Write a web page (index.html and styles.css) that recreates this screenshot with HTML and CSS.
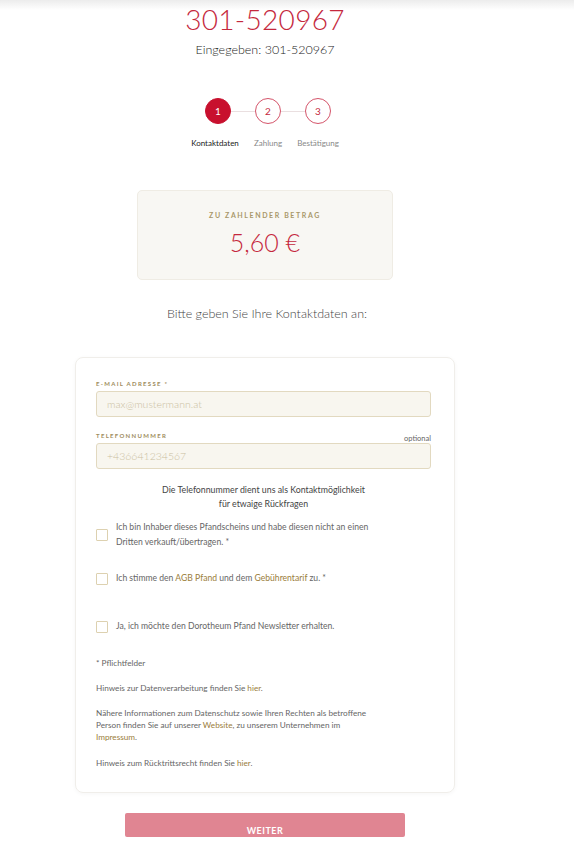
FILE: index.html
```html
<!DOCTYPE html>
<html lang="de">
<head>
<meta charset="utf-8">
<title>Kontaktdaten</title>
<link rel="stylesheet" href="styles.css">
</head>
<body>
<div class="topshade"></div>
<main class="page">
  <h1 class="ticket">301-520967</h1>
  <p class="entered">Eingegeben: 301-520967</p>

  <div class="steps">
    <div class="step active"><span class="circle">1</span><span class="step-label">Kontaktdaten</span></div>
    <div class="line"></div>
    <div class="step"><span class="circle">2</span><span class="step-label">Zahlung</span></div>
    <div class="line"></div>
    <div class="step"><span class="circle">3</span><span class="step-label">Bestätigung</span></div>
  </div>

  <div class="amount">
    <div class="amount-label">ZU ZAHLENDER BETRAG</div>
    <div class="amount-value">5,60 €</div>
  </div>

  <p class="intro">Bitte geben Sie Ihre Kontaktdaten an:</p>

  <form class="card">
    <div class="field">
      <div class="label-row"><label class="flabel">E-MAIL ADRESSE *</label></div>
      <input class="input" type="text" placeholder="max@mustermann.at">
    </div>
    <div class="field">
      <div class="label-row"><label class="flabel">TELEFONNUMMER</label><span class="optional">optional</span></div>
      <input class="input" type="text" placeholder="+436641234567">
    </div>
    <p class="help">Die Telefonnummer dient uns als Kontaktmöglichkeit<br>für etwaige Rückfragen</p>

    <div class="check check-1"><span class="box"></span><span class="ctext">Ich bin Inhaber dieses Pfandscheins und habe diesen nicht an einen Dritten verkauft/übertragen. *</span></div>
    <div class="check check-2"><span class="box"></span><span class="ctext">Ich stimme den <a class="link">AGB Pfand</a> und dem <a class="link">Gebührentarif</a> zu. *</span></div>
    <div class="check check-3"><span class="box"></span><span class="ctext">Ja, ich möchte den Dorotheum Pfand Newsletter erhalten.</span></div>

    <p class="note first">* Pflichtfelder</p>
    <p class="note">Hinweis zur Datenverarbeitung finden Sie <a class="link">hier</a>.</p>
    <p class="note">Nähere Informationen zum Datenschutz sowie Ihren Rechten als betroffene Person finden Sie auf unserer <a class="link">Website</a>, zu unserem Unternehmen im <a class="link">Impressum</a>.</p>
    <p class="note last">Hinweis zum Rücktrittsrecht finden Sie <a class="link">hier</a>.</p>
  </form>

  <div class="btn-wrap"><button class="btn" type="button">WEITER</button></div>
</main>
</body>
</html>
```

FILE: styles.css
```css
* { box-sizing: border-box; }
html, body { margin: 0; padding: 0; background: #fff; }
body {
  font-family: "Lato", "Open Sans", "Liberation Sans", sans-serif;
  color: #333;
  width: 574px;
  height: 849px;
  overflow: hidden;
  position: relative;
}
.topshade {
  position: absolute;
  left: 0; right: 0; top: 0;
  height: 10px;
  background: linear-gradient(#ececec, rgba(255,255,255,0));
}
.page {
  width: 530px;
  display: flex;
  flex-direction: column;
  align-items: center;
  padding-top: 3px;
}
.ticket {
  margin: 0;
  font-weight: 300;
  font-size: 28px;
  line-height: 32px;
  color: #c5283d;
  letter-spacing: 0.3px;
}
.entered {
  margin: 7px 0 0;
  font-size: 12.5px;
  line-height: 16px;
  color: #222;
  font-weight: 300;
}
.steps {
  margin-top: 40px;
  display: flex;
  align-items: flex-start;
  margin-left: 6px;
}
.step {
  width: 26px;
  display: flex;
  flex-direction: column;
  align-items: center;
}
.circle {
  width: 26px;
  height: 26px;
  border-radius: 50%;
  border: 1.5px solid #d4546a;
  color: #c5283d;
  font-size: 10px;
  display: flex;
  align-items: center;
  justify-content: center;
  background: #fff;
}
.step.active .circle {
  background: #c8102e;
  border-color: #c8102e;
  color: #fff;
}
.step-label {
  margin-top: 14px;
  font-size: 8px;
  line-height: 10px;
  white-space: nowrap;
  color: #888;
}
.step.active .step-label { color: #222; margin-right: 6px; }
.line {
  width: 24px;
  height: 1px;
  background: #eadfe0;
  margin-top: 13px;
}
.amount {
  margin-top: 42px;
  width: 256px;
  height: 90px;
  background: #f8f7f3;
  border: 1px solid #efece4;
  border-radius: 5px;
  display: flex;
  flex-direction: column;
  align-items: center;
  padding-top: 20px;
}
.amount-label {
  font-size: 7px;
  font-weight: 700;
  letter-spacing: 1.6px;
  color: #a8976a;
  line-height: 9px;
}
.amount-value {
  margin-top: 7px;
  font-size: 25px;
  font-weight: 300;
  color: #c5283d;
  line-height: 30px;
}
.intro {
  margin: 26px 0 0 4px;
  font-size: 12.5px;
  line-height: 16px;
  color: #444;
  font-weight: 300;
}
.card {
  margin-top: 35px;
  width: 380px;
  border: 1px solid #f0eeea;
  border-radius: 8px;
  box-shadow: 0 1px 4px rgba(0,0,0,0.04);
  padding: 18px 23px 23px 20px;
  display: flex;
  flex-direction: column;
}
.field { display: flex; flex-direction: column; }
.field + .field { margin-top: 11px; }
.label-row {
  display: flex;
  justify-content: space-between;
  align-items: flex-end;
  height: 12px;
}
.flabel {
  font-size: 6px;
  font-weight: 700;
  letter-spacing: 1.3px;
  color: #9e8c60;
  line-height: 8px;
}
.optional {
  font-size: 7.5px;
  color: #666;
  line-height: 9px;
  margin-bottom: -3px;
}
.input {
  margin-top: 3px;
  height: 26px;
  width: 100%;
  background: #f8f6ef;
  border: 1px solid #e2d9c0;
  border-radius: 3px;
  padding: 0 10px;
  font-family: inherit;
  font-size: 10.5px;
  color: #333;
  outline: none;
}
.input::placeholder { color: #cbbf9f; font-weight: 300; }
.help {
  margin: 14px 0 0;
  text-align: center;
  font-size: 8.8px;
  line-height: 14px;
  color: #444;
}
.check {
  display: flex;
  align-items: center;
  gap: 8px;
  font-size: 8.6px;
  line-height: 15px;
  color: #666;
}
.check-1 { margin-top: 9px; }
.check-2 { margin-top: 21px; }
.check-3 { margin-top: 33px; }
.box {
  flex: none;
  width: 12px;
  height: 12px;
  border: 1.2px solid #ddd1b0;
  border-radius: 1px;
  background: #fff;
}
.ctext { max-width: 275px; }
.link { color: #9a7d3a; text-decoration: none; }
.note {
  margin: 13px 0 0;
  font-size: 8.2px;
  line-height: 12px;
  color: #666;
  max-width: 285px;
}
.note.first { margin-top: 23px; }
.note.last { margin-top: 14px; }
.btn-wrap {
  width: 100%;
  display: flex;
  justify-content: center;
  margin-top: 20px;
}
.btn {
  width: 280px;
  height: 24px;
  background: #e08592;
  border: none;
  border-radius: 2px;
  color: #fff;
  font-family: inherit;
  font-weight: 700;
  font-size: 9px;
  letter-spacing: 0.5px;
  padding: 12px 0 0;
  line-height: 10px;
}
```
